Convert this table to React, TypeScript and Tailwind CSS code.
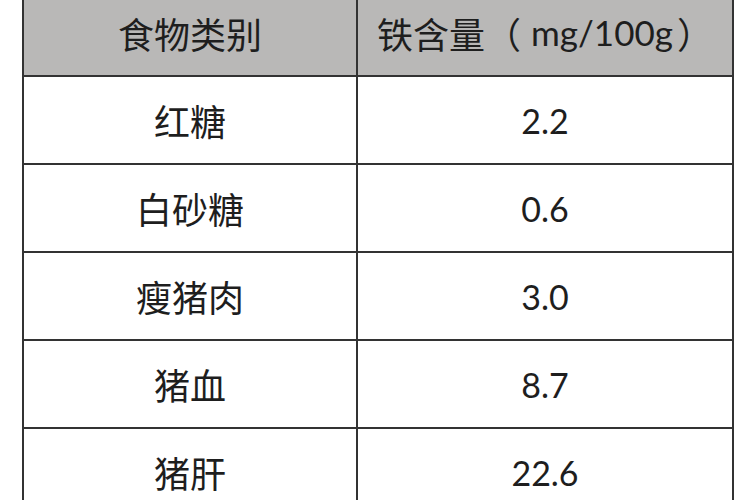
import React from "react";

const rows: [string, string][] = [
  ["红糖", "2.2"],
  ["白砂糖", "0.6"],
  ["瘦猪肉", "3.0"],
  ["猪血", "8.7"],
  ["猪肝", "22.6"],
];

export default function App() {
  return (
    <div className="w-[750px] h-[500px] bg-white overflow-hidden">
      <div className="ml-[22px] w-[712px] border-x-2 border-[#333333] flex flex-col text-[#1e1e1e]">
        <div className="flex h-[77px] shrink-0 bg-[#b9b8b7] border-b-2 border-[#333333]">
          <div className="w-[334px] border-r-2 border-[#333333] flex items-center justify-center pb-[10px] text-[36px] font-['Noto_Sans_CJK_SC',sans-serif]">
            食物类别
          </div>
          <div className="flex-1 flex items-center justify-center pb-[10px] text-[36px] font-['Noto_Sans_CJK_SC',sans-serif]">
            <span>铁含量（</span>
            <span className="ml-[10px] mr-[4px] font-['Lato',sans-serif] text-[35px]">mg/100g</span>
            <span>）</span>
          </div>
        </div>
        {rows.map(([name, val]) => (
          <div key={name} className="flex h-[88px] shrink-0 border-b-2 border-[#333333]">
            <div className="w-[334px] border-r-2 border-[#333333] flex items-center justify-center text-[36px] font-['Noto_Sans_CJK_SC',sans-serif]">
              {name}
            </div>
            <div className="flex-1 flex items-center justify-center text-[34px] font-['Lato',sans-serif]">
              {val}
            </div>
          </div>
        ))}
      </div>
    </div>
  );
}
